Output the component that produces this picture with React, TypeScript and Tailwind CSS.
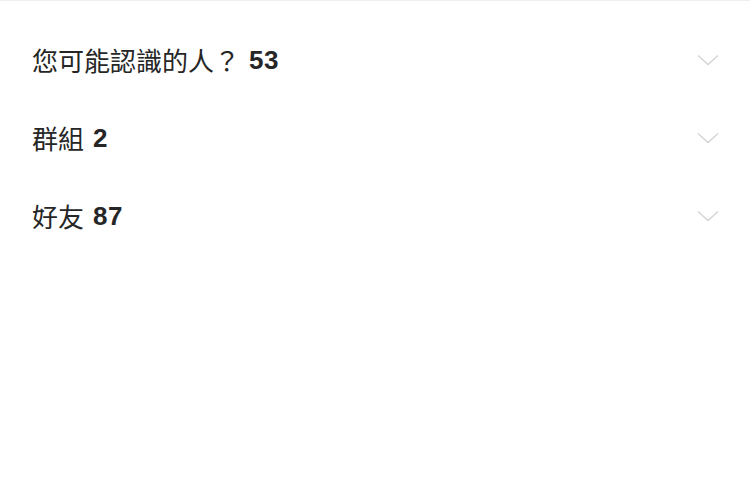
import React from "react";

const sections = [
  { label: "您可能認識的人？", count: 53 },
  { label: "群組", count: 2 },
  { label: "好友", count: 87 },
];

function Chevron() {
  return (
    <svg width="22" height="12" viewBox="0 0 22 12" fill="none">
      <path d="M1 1.5 L11 10.5 L21 1.5" stroke="#d4d4d4" strokeWidth="1.4" />
    </svg>
  );
}

export default function App() {
  return (
    <div className="w-[750px] h-[480px] bg-white border-t border-[#efefef] pt-[20px]">
      {sections.map((s) => (
        <div
          key={s.label}
          className="flex h-[78px] items-center justify-between pl-[32px] pr-[31px]"
        >
          <p className="flex items-center text-[#262626]">
            <span className="text-[26px] leading-none font-normal font-['Noto_Sans_CJK_TC',sans-serif]">
              {s.label}
            </span>
            <span className="ml-[9px] text-[26px] leading-none tracking-[0.5px] font-bold font-['Liberation_Sans',sans-serif]">
              {s.count}
            </span>
          </p>
          <Chevron />
        </div>
      ))}
    </div>
  );
}
